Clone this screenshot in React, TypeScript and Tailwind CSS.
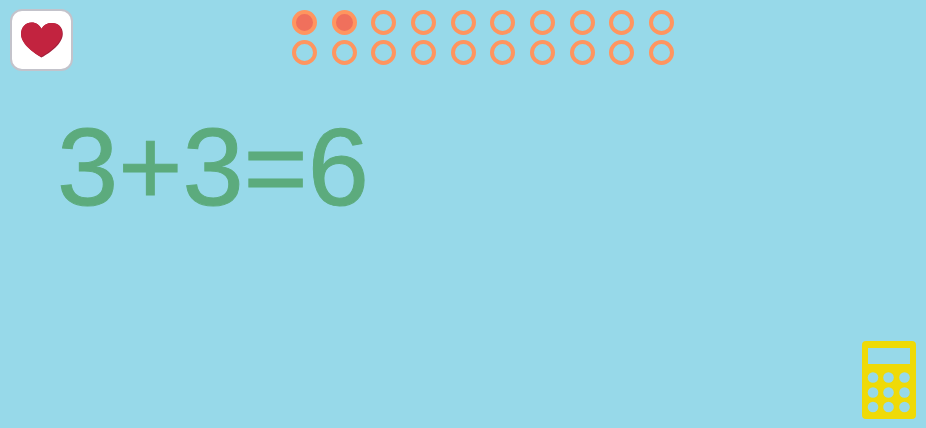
const TOTAL = 20;
const DONE = 2;

function Heart() {
  return (
    <svg viewBox="0 0 42 36" className="h-9 w-[42px]" aria-hidden="true">
      <path
        d="M20.500 35.500C16.500 33.500 1 23 0 12.500C0 5.500 4.500.5 10.500.5C15.500.5 18.500 3 20.500 6.800C22.500 3 26 1 31 1C37.500 1 42 5.500 41.800 12C41.500 23.500 24.500 33.500 20.500 35.500Z"
        fill="#a3203c"
      />
      <path
        d="M20 34.500C15.500 32.500 0 23.500 0 12C0 5 4.500.5 10.500.5C15.500.5 18.500 3 20.500 6.800C22.500 3 26 1 31 1C37 1 41 5 41 11C41 22 26 31 20 34.500Z"
        fill="#c2233f"
      />
    </svg>
  );
}

function Calculator() {
  return (
    <svg viewBox="0 0 54 78" className="h-[78px] w-[54px]" aria-hidden="true">
      <rect width="54" height="78" rx="4" fill="#efda07" />
      <rect x="6" y="7" width="42" height="16" fill="#97d9e9" />
      {[36.5, 51.5, 66].map((cy) =>
        [11, 26.5, 42.5].map((cx) => (
          <circle key={`${cx}-${cy}`} cx={cx} cy={cy} r="5.3" fill="#97d9e9" />
        )),
      )}
    </svg>
  );
}

function Dot({ filled }: { filled: boolean }) {
  return (
    <li
      className={`size-[25px] rounded-full border-4 border-[#ff955f] ${filled ? "bg-[#f0705c]" : ""}`}
    />
  );
}

export default function App() {
  const dots = Array.from({ length: TOTAL }, (_, i) => i < DONE);
  const rows = [dots.slice(0, TOTAL / 2), dots.slice(TOTAL / 2)];

  return (
    <main className="flex min-h-screen flex-col bg-[#97d9e9] font-['Liberation_Sans',Arial,sans-serif]">
      <header className="flex items-start pt-[9px] pr-[33px] pl-2.5">
        <button
          type="button"
          aria-label="Favourite"
          className="flex h-[62px] w-[63px] shrink-0 items-center justify-center rounded-xl border-2 border-[#c3c3cb] bg-white"
        >
          <Heart />
        </button>
        <div className="flex flex-1 justify-center pt-px">
          <div className="flex w-[382px] flex-col gap-[5px]" aria-label="Progress">
            {rows.map((row, r) => (
              <ul key={r} className="flex justify-between">
                {row.map((filled, i) => (
                  <Dot key={i} filled={filled} />
                ))}
              </ul>
            ))}
          </div>
        </div>
      </header>
      <p className="mt-9 px-[57px] text-[110px] leading-[120px] text-[#5cab7d] [-webkit-text-stroke:1px_#5cab7d]">
        3+3=6
      </p>
      <footer className="mt-auto flex justify-end pr-2.5 pb-[9px]">
        <button type="button" aria-label="Calculator">
          <Calculator />
        </button>
      </footer>
    </main>
  );
}
